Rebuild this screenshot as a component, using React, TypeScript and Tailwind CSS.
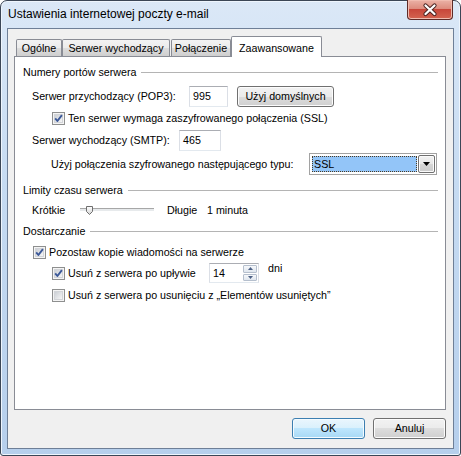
import React from "react";

const font = "font-['Liberation_Sans',Arial,sans-serif]";

function Check({ checked }: { checked?: boolean }) {
  return (
    <svg width="13" height="13" viewBox="0 0 13 13" className="shrink-0">
      <defs>
        <linearGradient id="cbg" x1="0" y1="0" x2="1" y2="1">
          <stop offset="0" stopColor="#c9cdd3" />
          <stop offset="1" stopColor="#f8f8f8" />
        </linearGradient>
      </defs>
      <rect x="0.5" y="0.5" width="12" height="12" fill="#f4f4f4" stroke="#8e8f8f" />
      <rect x="2.5" y="2.5" width="8" height="8" fill="url(#cbg)" stroke="#d2d4d8" />
      {checked && (
        <path d="M3.2 6.3 L5.4 9 L9.9 3.2" fill="none" stroke="#3b5898" strokeWidth="1.9" strokeLinejoin="round" />
      )}
    </svg>
  );
}

function Group({ title, className }: { title: string; className: string }) {
  return (
    <div className={`flex items-center h-[16px] pl-[8px] ${className}`}>
      <span>{title}</span>
      <div className="flex-1 h-px bg-[#b4b4b4] ml-[5px]" />
    </div>
  );
}

const field =
  "h-[21px] border border-[#abadb3] border-l-[#dbdfe6] border-r-[#dbdfe6] border-b-[#e3e9ef] bg-white flex items-center pl-[3px]";

const button =
  "h-[21px] rounded-[3px] border border-[#707070] bg-[linear-gradient(to_bottom,#f2f2f2_0%,#ebebeb_50%,#dddddd_50%,#cfcfcf_100%)] shadow-[inset_0_0_0_1px_#fcfcfc] flex items-center justify-center";

function Tab({ label, active, className }: { label: string; active?: boolean; className: string }) {
  if (active) {
    return (
      <div className={`relative z-10 h-[21px] -mb-px border border-b-0 border-[#898c95] bg-white rounded-t-[2px] flex justify-center pt-[3px] ${className}`}>
        {label}
      </div>
    );
  }
  return (
    <div className={`h-[17px] border border-b-0 border-[#898c95] rounded-t-[2px] bg-[linear-gradient(to_bottom,#f3f3f3_0%,#ebebeb_50%,#dddddd_51%,#cfcfcf_100%)] flex items-center justify-center ${className}`}>
      {label}
    </div>
  );
}

export default function App() {
  return (
    <div className={`${font} text-[10.7px] text-black relative w-[461px] h-[456px] rounded-t-[7px] rounded-b-[3px] border border-[#3b4656] bg-[linear-gradient(to_bottom,#dbe8f7_0%,#c6dbf2_40%,#b6cfec_100%)] shadow-[inset_0_0_0_1px_#eef5fd] flex flex-col px-[6px] pb-[6px]`}>
      {/* title bar */}
      <div className="h-[28px] flex items-center pl-[1px] pb-[2px] text-[12px]">
        Ustawienia internetowej poczty e-mail
      </div>
      <div className="absolute left-[406px] -top-px w-[46px] h-[20px] rounded-b-[4px] border border-t-0 border-[#5e2b27] bg-[linear-gradient(to_bottom,#ebb2a6_0%,#dd8c7e_45%,#c8473a_50%,#d46450_100%)] shadow-[inset_0_0_0_1px_#f1bcb0]">
        <svg width="44" height="19" viewBox="0 0 44 19" className="absolute left-0 top-0">
          <path d="M17.5 5.5 L26.5 14 M26.5 5.5 L17.5 14" stroke="#4a2320" strokeWidth="4.2" strokeLinecap="round" />
          <path d="M17.5 5.5 L26.5 14 M26.5 5.5 L17.5 14" stroke="#ffffff" strokeWidth="2.3" strokeLinecap="round" />
        </svg>
      </div>

      {/* client area */}
      <div className="flex-1 border border-[#6e7f97] bg-[#f0f0f0] pl-[6px] pr-[7px] pt-[7px] pb-[9px] flex flex-col">
        <div className="h-[20px] flex items-end pl-[2px]">
          <Tab label="Ogólne" className="w-[46px]" />
          <Tab label="Serwer wychodzący" className="w-[108px]" />
          <Tab label="Połączenie" className="w-[60px] ml-px" />
          <Tab label="Zaawansowane" active className="w-[91px]" />
        </div>

        <div className="h-[354px] border border-[#898c95] bg-white pr-[7px] pt-[7px] flex flex-col">
          <Group title="Numery portów serwera" className="" />

          <div className="flex items-center h-[21px] mt-[6px] pl-[17px]">
            <span className="w-[157px]">Serwer przychodzący (POP3):</span>
            <div className={`${field} w-[39px]`}>995</div>
            <div className={`${button} w-[97px] ml-[9px]`}>Użyj domyślnych</div>
          </div>

          <div className="flex items-center gap-[3px] h-[16px] mt-[3px] pl-[37px]">
            <Check checked />
            <span>Ten serwer wymaga zaszyfrowanego połączenia (SSL)</span>
          </div>

          <div className="flex items-center h-[21px] mt-[4px] pl-[17px]">
            <span className="w-[147px]">Serwer wychodzący (SMTP):</span>
            <div className={`${field} w-[42px]`}>465</div>
          </div>

          <div className="flex items-center h-[22px] mt-[2px] pl-[36px]">
            <span className="w-[258px]">Użyj połączenia szyfrowanego następującego typu:</span>
            <div className="w-[128px] h-[22px] border border-[#a2a2a2] bg-white flex items-center pl-[2px] pr-[1px] gap-px">
              <div className="flex-1 h-[16px] bg-[#93c5f8] border border-dotted border-[#4b3a22] flex items-center pl-px">
                SSL
              </div>
              <div className="w-[17px] h-[18px] rounded-[2px] border border-[#707070] bg-[linear-gradient(to_bottom,#f2f2f2_0%,#e6e6e6_50%,#d6d6d6_51%,#cbcbcb_100%)] shadow-[inset_0_0_0_1px_#fafafa] flex items-center justify-center">
                <svg width="7" height="4" viewBox="0 0 7 4">
                  <path d="M0 0 H7 L3.5 4 Z" fill="#000" />
                </svg>
              </div>
            </div>
          </div>

          <Group title="Limity czasu serwera" className="mt-[7px]" />

          <div className="flex items-center h-[16px] mt-[4px] pl-[17px]">
            <span className="w-[48px]">Krótkie</span>
            <div className="relative w-[74px] h-[4px] border-t border-[#a7a7a7] bg-[#e7eaec] border-b border-b-[#ffffff]">
              <svg width="7" height="9" viewBox="0 0 7 9" className="absolute left-[6px] -top-[3px]">
                <defs>
                  <linearGradient id="thumb" x1="0" y1="0" x2="0" y2="1">
                    <stop offset="0" stopColor="#ffffff" />
                    <stop offset="1" stopColor="#d4d4d4" />
                  </linearGradient>
                </defs>
                <path d="M0.5 0.5 H6.5 V5.5 L3.5 8.5 L0.5 5.5 Z" fill="url(#thumb)" stroke="#6f6f6f" />
              </svg>
            </div>
            <span className="w-[40px] ml-[13px]">Długie</span>
            <span>1 minuta</span>
          </div>

          <Group title="Dostarczanie" className="mt-[5px]" />

          <div className="flex items-center gap-[3px] h-[16px] mt-[5px] pl-[18px]">
            <Check checked />
            <span>Pozostaw kopie wiadomości na serwerze</span>
          </div>

          <div className="flex items-center h-[20px] mt-[3px] pl-[37px]">
            <Check checked />
            <span className="w-[141px] ml-[3px]">Usuń z serwera po upływie</span>
            <div className="w-[50px] h-[20px] border border-[#abadb3] border-l-[#dbdfe6] border-r-[#dbdfe6] border-b-[#e3e9ef] bg-white flex items-stretch">
              <span className="flex-1 flex items-center pl-[3px]">14</span>
              <div className="w-[15px] flex flex-col py-px pr-px gap-px">
                <div className="flex-1 border border-[#b5bfcd] rounded-[1px] bg-[linear-gradient(to_bottom,#f6f8fb,#dfe6ee)] flex items-center justify-center">
                  <svg width="5" height="3" viewBox="0 0 5 3">
                    <path d="M0 3 H5 L2.5 0 Z" fill="#4d6185" />
                  </svg>
                </div>
                <div className="flex-1 border border-[#b5bfcd] rounded-[1px] bg-[linear-gradient(to_bottom,#f6f8fb,#dfe6ee)] flex items-center justify-center">
                  <svg width="5" height="3" viewBox="0 0 5 3">
                    <path d="M0 0 H5 L2.5 3 Z" fill="#4d6185" />
                  </svg>
                </div>
              </div>
            </div>
            <span className="ml-[9px] self-start -mt-[3px] leading-[16px]">dni</span>
          </div>

          <div className="flex items-center gap-[3px] h-[16px] mt-[4px] pl-[37px]">
            <Check />
            <span>Usuń z serwera po usunięciu z „Elementów usuniętych”</span>
          </div>
        </div>

        <div className="flex justify-end gap-[8px] mt-[8px]">
          <div className="w-[73px] h-[21px] rounded-[3px] border border-[#3c7fb1] bg-[linear-gradient(to_bottom,#eaf6fd_0%,#d9f0fc_50%,#bee6fd_50%,#a7d9f5_100%)] shadow-[inset_0_0_0_1px_#f4fbff] flex items-center justify-center">
            OK
          </div>
          <div className={`${button} w-[73px]`}>Anuluj</div>
        </div>
      </div>
    </div>
  );
}
